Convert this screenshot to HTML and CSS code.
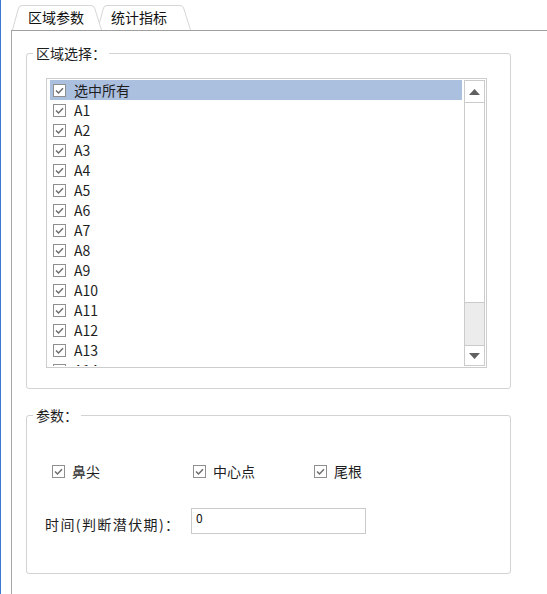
FILE: index.html
```html
<!DOCTYPE html>
<html lang="zh-CN">
<head>
<meta charset="utf-8">
<link rel="stylesheet" href="styles.css">
</head>
<body>
<div class="page">
  <div class="edge"></div>
  <div class="tabctl">
    <div class="tabs">
      <div class="tab tab-active">
        <svg class="tab-shape" viewBox="0 0 90 25" preserveAspectRatio="none"><path d="M0.5 25 L6.5 3 Q7.3 0.5 10 0.5 L79 0.5 Q81.8 0.5 82.6 3 L89.5 25" fill="#fff" stroke="#d6d6d6"/></svg>
        <span class="tab-label">区域参数</span>
      </div>
      <div class="tab tab-other">
        <svg class="tab-shape" viewBox="0 0 94 25" preserveAspectRatio="none"><path d="M0.5 25 L6.5 3 Q7.3 0.5 10 0.5 L83 0.5 Q85.8 0.5 86.6 3 L93.5 25" fill="#fff" stroke="#d6d6d6"/></svg>
        <span class="tab-label">统计指标</span>
      </div>
    </div>
    <div class="panel">
      <fieldset class="group group-area">
        <legend>区域选择：</legend>
        <div class="group-body area-body">
          <div class="listbox">
            <div class="items">
              <div class="row row-sel"><span class="cb"><svg viewBox="0 0 13 13"><rect x="0.5" y="0.5" width="12" height="12" fill="#fff" stroke="#8f8f8f"/><path d="M3 6.5 L5.5 9 L10 4.2" fill="none" stroke="#6e6e6e" stroke-width="1.5"/></svg></span>选中所有</div>
              <div class="row"><span class="cb"><svg viewBox="0 0 13 13"><rect x="0.5" y="0.5" width="12" height="12" fill="#fff" stroke="#8f8f8f"/><path d="M3 6.5 L5.5 9 L10 4.2" fill="none" stroke="#6e6e6e" stroke-width="1.5"/></svg></span>A1</div>
              <div class="row"><span class="cb"><svg viewBox="0 0 13 13"><rect x="0.5" y="0.5" width="12" height="12" fill="#fff" stroke="#8f8f8f"/><path d="M3 6.5 L5.5 9 L10 4.2" fill="none" stroke="#6e6e6e" stroke-width="1.5"/></svg></span>A2</div>
              <div class="row"><span class="cb"><svg viewBox="0 0 13 13"><rect x="0.5" y="0.5" width="12" height="12" fill="#fff" stroke="#8f8f8f"/><path d="M3 6.5 L5.5 9 L10 4.2" fill="none" stroke="#6e6e6e" stroke-width="1.5"/></svg></span>A3</div>
              <div class="row"><span class="cb"><svg viewBox="0 0 13 13"><rect x="0.5" y="0.5" width="12" height="12" fill="#fff" stroke="#8f8f8f"/><path d="M3 6.5 L5.5 9 L10 4.2" fill="none" stroke="#6e6e6e" stroke-width="1.5"/></svg></span>A4</div>
              <div class="row"><span class="cb"><svg viewBox="0 0 13 13"><rect x="0.5" y="0.5" width="12" height="12" fill="#fff" stroke="#8f8f8f"/><path d="M3 6.5 L5.5 9 L10 4.2" fill="none" stroke="#6e6e6e" stroke-width="1.5"/></svg></span>A5</div>
              <div class="row"><span class="cb"><svg viewBox="0 0 13 13"><rect x="0.5" y="0.5" width="12" height="12" fill="#fff" stroke="#8f8f8f"/><path d="M3 6.5 L5.5 9 L10 4.2" fill="none" stroke="#6e6e6e" stroke-width="1.5"/></svg></span>A6</div>
              <div class="row"><span class="cb"><svg viewBox="0 0 13 13"><rect x="0.5" y="0.5" width="12" height="12" fill="#fff" stroke="#8f8f8f"/><path d="M3 6.5 L5.5 9 L10 4.2" fill="none" stroke="#6e6e6e" stroke-width="1.5"/></svg></span>A7</div>
              <div class="row"><span class="cb"><svg viewBox="0 0 13 13"><rect x="0.5" y="0.5" width="12" height="12" fill="#fff" stroke="#8f8f8f"/><path d="M3 6.5 L5.5 9 L10 4.2" fill="none" stroke="#6e6e6e" stroke-width="1.5"/></svg></span>A8</div>
              <div class="row"><span class="cb"><svg viewBox="0 0 13 13"><rect x="0.5" y="0.5" width="12" height="12" fill="#fff" stroke="#8f8f8f"/><path d="M3 6.5 L5.5 9 L10 4.2" fill="none" stroke="#6e6e6e" stroke-width="1.5"/></svg></span>A9</div>
              <div class="row"><span class="cb"><svg viewBox="0 0 13 13"><rect x="0.5" y="0.5" width="12" height="12" fill="#fff" stroke="#8f8f8f"/><path d="M3 6.5 L5.5 9 L10 4.2" fill="none" stroke="#6e6e6e" stroke-width="1.5"/></svg></span>A10</div>
              <div class="row"><span class="cb"><svg viewBox="0 0 13 13"><rect x="0.5" y="0.5" width="12" height="12" fill="#fff" stroke="#8f8f8f"/><path d="M3 6.5 L5.5 9 L10 4.2" fill="none" stroke="#6e6e6e" stroke-width="1.5"/></svg></span>A11</div>
              <div class="row"><span class="cb"><svg viewBox="0 0 13 13"><rect x="0.5" y="0.5" width="12" height="12" fill="#fff" stroke="#8f8f8f"/><path d="M3 6.5 L5.5 9 L10 4.2" fill="none" stroke="#6e6e6e" stroke-width="1.5"/></svg></span>A12</div>
              <div class="row"><span class="cb"><svg viewBox="0 0 13 13"><rect x="0.5" y="0.5" width="12" height="12" fill="#fff" stroke="#8f8f8f"/><path d="M3 6.5 L5.5 9 L10 4.2" fill="none" stroke="#6e6e6e" stroke-width="1.5"/></svg></span>A13</div>
              <div class="row"><span class="cb"><svg viewBox="0 0 13 13"><rect x="0.5" y="0.5" width="12" height="12" fill="#fff" stroke="#8f8f8f"/><path d="M3 6.5 L5.5 9 L10 4.2" fill="none" stroke="#6e6e6e" stroke-width="1.5"/></svg></span>A14</div>
            </div>
            <div class="scrollbar">
              <div class="sb-btn sb-up"><svg viewBox="0 0 11 6" class="arrow"><path d="M0 6 L5.5 0 L11 6 Z" fill="#606060"/></svg></div>
              <div class="sb-thumb"></div>
              <div class="sb-track"></div>
              <div class="sb-btn sb-down"><svg viewBox="0 0 11 6" class="arrow"><path d="M0 0 L5.5 6 L11 0 Z" fill="#606060"/></svg></div>
            </div>
          </div>
        </div>
      </fieldset>
      <fieldset class="group group-params">
        <legend>参数：</legend>
        <div class="group-body params-body">
          <div class="checks">
            <label class="check check-w1"><span class="cb"><svg viewBox="0 0 13 13"><rect x="0.5" y="0.5" width="12" height="12" fill="#fff" stroke="#8f8f8f"/><path d="M3 6.5 L5.5 9 L10 4.2" fill="none" stroke="#6e6e6e" stroke-width="1.5"/></svg></span>鼻尖</label>
            <label class="check check-w2"><span class="cb"><svg viewBox="0 0 13 13"><rect x="0.5" y="0.5" width="12" height="12" fill="#fff" stroke="#8f8f8f"/><path d="M3 6.5 L5.5 9 L10 4.2" fill="none" stroke="#6e6e6e" stroke-width="1.5"/></svg></span>中心点</label>
            <label class="check"><span class="cb"><svg viewBox="0 0 13 13"><rect x="0.5" y="0.5" width="12" height="12" fill="#fff" stroke="#8f8f8f"/><path d="M3 6.5 L5.5 9 L10 4.2" fill="none" stroke="#6e6e6e" stroke-width="1.5"/></svg></span>尾根</label>
          </div>
          <div class="time-row">
            <span class="time-label">时间(判断潜伏期)：</span>
            <div class="textbox">0</div>
          </div>
        </div>
      </fieldset>
    </div>
  </div>
</div>
</body>
</html>
```
FILE: styles.css
```css
html, body {
  margin: 0;
  padding: 0;
  background: #fff;
}
body {
  font-family: "Noto Sans CJK SC", "Noto Sans", sans-serif;
  font-size: 14px;
  color: #1e1e1e;
}
.page {
  display: flex;
  height: 594px;
  overflow: hidden;
}
.edge {
  width: 1px;
  background: #3b79d2;
  flex: none;
}
.tabctl {
  margin-left: 10px;
  flex: 1;
  display: flex;
  flex-direction: column;
  padding-top: 5px;
}
.tabs {
  display: flex;
  height: 25px;
  padding-left: 1px;
}
.tab {
  position: relative;
  height: 25px;
  line-height: 25px;
  box-sizing: border-box;
}
.tab-shape {
  position: absolute;
  left: 0;
  top: 0;
  width: 100%;
  height: 100%;
}
.tab-label {
  position: relative;
  color: #111;
}
.tab-active {
  width: 90px;
  padding-left: 16px;
  z-index: 2;
}
.tab-other {
  width: 94px;
  margin-left: -5px;
  padding-left: 14px;
  z-index: 1;
}
.panel {
  flex: 1;
  border-left: 1px solid #a8a8a8;
  border-top: 1px solid #a0a0a0;
  padding: 12px 0 0 14px;
  display: flex;
  flex-direction: column;
}
.group {
  margin: 0;
  padding: 0;
  min-width: 0;
  width: 485px;
  box-sizing: border-box;
  border: 1px solid #d3d3d3;
  border-radius: 3px;
}
.group legend {
  margin-left: 6px;
  padding: 0 3px;
  line-height: 20px;
  height: 20px;
  font-size: 14px;
  color: #1e1e1e;
}
.area-body {
  padding: 15px 0 20px 19px;
}
.listbox {
  width: 441px;
  height: 290px;
  box-sizing: border-box;
  border: 1px solid #cdcdcd;
  padding: 1px;
  display: flex;
  overflow: hidden;
}
.items {
  flex: 1;
  padding-left: 2px;
  margin-right: 2px;
  overflow: hidden;
}
.row {
  height: 20px;
  line-height: 20px;
  display: flex;
  align-items: center;
  white-space: nowrap;
}
.row-sel {
  background: #abbfdf;
}
.cb {
  width: 13px;
  height: 13px;
  display: inline-block;
  flex: none;
}
.cb svg {
  display: block;
  width: 13px;
  height: 13px;
}
.row .cb {
  margin-left: 3px;
  margin-right: 8px;
}
.scrollbar {
  width: 21px;
  box-sizing: border-box;
  border: 1px solid #cbcbcb;
  display: flex;
  flex-direction: column;
  flex: none;
}
.sb-btn {
  display: flex;
  align-items: center;
  justify-content: center;
  background: #fff;
  flex: none;
}
.sb-up {
  height: 21px;
  border-bottom: 1px solid #cbcbcb;
}
.sb-down {
  height: 19px;
  border-top: 1px solid #cbcbcb;
}
.arrow {
  width: 11px;
  height: 6px;
  display: block;
}
.sb-thumb {
  height: 199px;
  border-bottom: 1px solid #cbcbcb;
  background: #fff;
  flex: none;
}
.sb-track {
  flex: 1;
  background: #ececec;
}
.group-params {
  margin-top: 16px;
}
.params-body {
  padding: 36px 0 39px 25px;
}
.checks {
  display: flex;
  height: 20px;
  align-items: center;
}
.check {
  display: flex;
  align-items: center;
  line-height: 20px;
  white-space: nowrap;
}
.check .cb {
  margin-right: 7px;
}
.check-w1 {
  width: 141px;
}
.check-w2 {
  width: 121px;
}
.time-row {
  display: flex;
  align-items: flex-end;
  margin-top: 27px;
  margin-left: -7px;
}
.time-label {
  width: 146px;
  line-height: 20px;
  white-space: nowrap;
  letter-spacing: 1.4px;
}
.textbox {
  width: 175px;
  height: 26px;
  box-sizing: border-box;
  border: 1px solid #cacaca;
  font-size: 12px;
  line-height: 16px;
  padding: 1px 4px;
  color: #111;
}
```
